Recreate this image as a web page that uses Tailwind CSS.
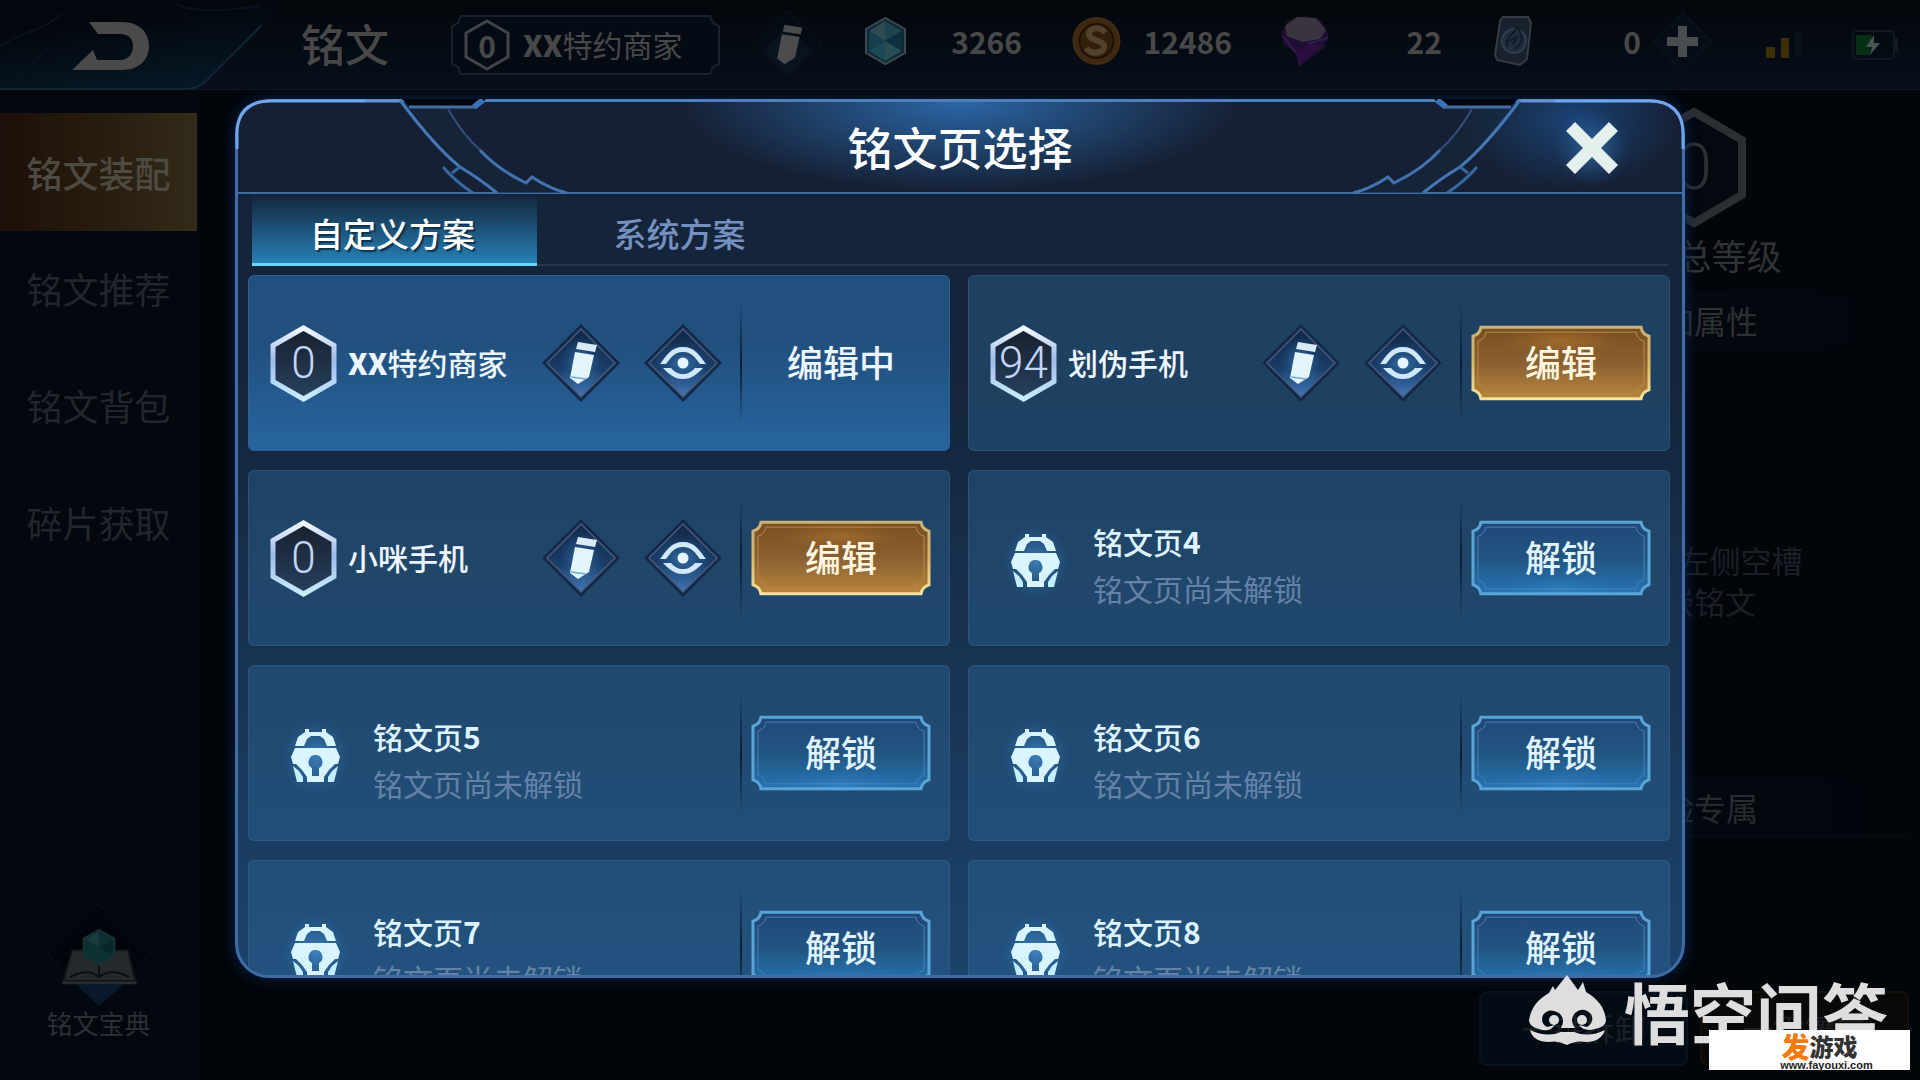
<!DOCTYPE html>
<html lang="zh-CN">
<head>
    <meta charset="UTF-8">
    <meta name="viewport" content="width=device-width, initial-scale=1.0">
    <title>铭文页选择</title>
    <script src="https://cdn.jsdelivr.net/npm/@tailwindcss/browser@4"></script>
</head>
<body class="bg-[#02060b] font-['Noto_Sans_CJK_SC',sans-serif] text-[#484848]">
    <!-- Shared icons -->
    <svg class="absolute h-0 w-0" aria-hidden="true">
        <defs>
            <linearGradient id="hexStroke" x1="0" y1="0" x2="0" y2="1">
                <stop offset="0" stop-color="#f1f7ff"/><stop offset=".45" stop-color="#9cbbea"/><stop offset="1" stop-color="#c9ecff"/>
            </linearGradient>
            <linearGradient id="hexFill" x1="0" y1="0" x2="0" y2="1">
                <stop offset="0" stop-color="#16202c"/><stop offset="1" stop-color="#28415f"/>
            </linearGradient>
            <linearGradient id="diamondFill" x1="0" y1="0" x2="0" y2="1">
                <stop offset="0" stop-color="#122848"/><stop offset=".6" stop-color="#1a3c66"/><stop offset="1" stop-color="#447abb"/>
            </linearGradient>
            <linearGradient id="goldFill" x1="0" y1="0" x2="0" y2="1">
                <stop offset="0" stop-color="#7a4f20"/><stop offset=".5" stop-color="#8a6032"/><stop offset="1" stop-color="#b8863c"/>
            </linearGradient>
            <linearGradient id="goldLine" x1="0" y1="0" x2="0" y2="1">
                <stop offset="0" stop-color="#c9b27a"/><stop offset=".5" stop-color="#d9b865"/><stop offset="1" stop-color="#f5e39c"/>
            </linearGradient>
            <linearGradient id="blueFill" x1="0" y1="0" x2="0" y2="1">
                <stop offset="0" stop-color="#21477a"/><stop offset=".5" stop-color="#22557f"/><stop offset="1" stop-color="#2674b4"/>
            </linearGradient>
            <radialGradient id="glow"><stop offset="0" stop-color="#5cb4ff" stop-opacity=".6"/><stop offset="1" stop-color="#2f86d8" stop-opacity="0"/></radialGradient>
            <radialGradient id="goldGlow"><stop offset="0" stop-color="#c08236" stop-opacity=".45"/><stop offset="1" stop-color="#b87828" stop-opacity="0"/></radialGradient>
        </defs>
        <symbol id="hexagon" viewBox="0 0 67 77">
            <path d="M33.500 3 64 20.500V56.500L33.500 74 3 56.500V20.500Z" fill="url(#hexFill)" stroke="url(#hexStroke)" stroke-width="5"/>
        </symbol>
        <symbol id="diamond" viewBox="0 0 78 78">
            <path d="M39 0 78 39 39 78 0 39Z" fill="#14294a"/>
            <path d="M39 5 73 39 39 73 5 39Z" fill="url(#diamondFill)" stroke="#47597a" stroke-width="1.500"/>
        </symbol>
        <symbol id="pencil" viewBox="0 0 78 78">
            <ellipse cx="39" cy="39" rx="22" ry="27" fill="url(#glow)" opacity=".7"/>
            <path d="M36 18 55 21 53 28 34 25Z" fill="#d9ebf6"/>
            <path d="M33 28 52 31 47 53 36 60 28 54Z" fill="#e3f5fb"/>
            <path d="M29 53 44 55" stroke="#6fa8cd" stroke-width="1.500"/>
        </symbol>
        <symbol id="eye" viewBox="0 0 78 78">
            <ellipse cx="39" cy="39" rx="30" ry="22" fill="url(#glow)" opacity=".7"/>
            <path d="M16 40H22C27 34 30 28 39 28S51 34 56 40H62C55 31 51 23 39 23S23 31 16 40Z" fill="#cfe8fb"/>
            <path d="M19 44H27C31 48 34 50 39 50S47 48 51 44H59C53 50 48 55 39 55S25 50 19 44Z" fill="#cfe8fb"/>
            <circle cx="39" cy="39" r="5.500" fill="#e6f5ff"/>
        </symbol>
        <symbol id="lock" viewBox="0 0 70 76">
            <ellipse cx="35" cy="38" rx="33" ry="37" fill="url(#glow)" opacity=".8"/>
            <path d="M14 27 17 18 24 13V10H28V13H41V10H45V13L52 18 55 27H46L43 20 39 17H30L26 20 23 27Z" fill="#d8f5ff"/>
            <path fill-rule="evenodd" d="M14 29H55L59 38 57 45H54L48 51 43 58V63H26V58L21 51 15 45H12L10 38ZM34.500 36A7 7 0 0 0 31 49V57H38V49A7 7 0 0 0 34.500 36Z" fill="#d8f5ff"/>
            <path d="M12 47 18 52 22 58V63H16ZM57 47 51 52 47 58V63H53Z" fill="#c4edff"/>
        </symbol>
        <symbol id="frame" viewBox="0 0 181 76">
            <path d="M10 2H171Q172 9 179 11V65Q172 67 171 74H10Q9 67 2 65V11Q9 9 10 2Z"/>
        </symbol>
        <symbol id="frameInner" viewBox="0 0 181 76">
            <path d="M15 7H166Q167 14 174 16V60Q167 62 166 69H15Q14 62 7 60V16Q14 14 15 7Z"/>
        </symbol>
    </svg>

    <div class="relative flex h-screen flex-col overflow-hidden">
        <!-- Top bar -->
        <header class="flex h-[90px] shrink-0 items-center border-b border-[#0f1925] bg-linear-to-b from-[#03070b] to-[#080f1b] pr-[22px]">
            <button class="h-[90px] w-[285px] shrink-0" aria-label="返回">
                <svg viewBox="0 0 285 90" class="h-full w-full">
                    <defs><linearGradient id="backFill" x1="0" y1="0" x2=".4" y2="1"><stop offset=".3" stop-color="#03060d"/><stop offset="1" stop-color="#051723"/></linearGradient></defs>
                    <path d="M0 0H285L207 80Q198 90 184 90H0Z" fill="url(#backFill)"/>
                    <path d="M262 25 207 80Q198 89 184 89H0" fill="none" stroke="#102635" stroke-width="2"/>
                    <path d="M60 14C44 32 24 30 0 46M48 48C36 66 22 64 18 82M175 4C200 14 230 10 260 6" fill="none" stroke="#091320" stroke-width="2"/>
                    <path d="M89 22H122C140 22 149 33 149 46S140 70 122 70H72L93 50 97 60H120C128 60 133 54 133 46S128 34 120 34H98Z" fill="#4a4a4b"/>
                </svg>
            </button>
            <h1 class="ml-[16px] w-[89px] shrink-0 pb-[4px] text-[44px] font-medium leading-none">铭文</h1>
            <button class="relative ml-[61px] flex h-[60px] w-[269px] shrink-0 items-center pl-[13px]">
                <svg viewBox="0 0 269 60" class="absolute inset-0 h-full w-full"><path d="M10 1H259L262 8 268 11V49L262 52 259 59H10L7 52 1 49V11L7 8Z" fill="#050b15" stroke="#17222e" stroke-width="2"/></svg>
                <span class="relative flex h-[52px] w-[46px] items-center justify-center text-[30px] font-bold leading-none">
                    <svg viewBox="0 0 46 52" class="absolute inset-0 h-full w-full"><path d="M23 2 44 14V38L23 50 2 38V14Z" fill="none" stroke="#41454a" stroke-width="3"/></svg>
                    0
                </span>
                <span class="relative ml-[13px] whitespace-nowrap pb-[2px] text-[30px] leading-none"><b class="font-black">XX</b>特约商家</span>
            </button>
            <button class="ml-[31px] w-[73px] shrink-0" aria-label="改名">
                <svg viewBox="0 0 78 78" class="h-[73px] w-[73px]">
                    <path d="M39 2 76 39 39 76 2 39Z" fill="#050b14" stroke="#0d1623"/>
                    <path d="M12 46 39 20 66 46 39 74Z" fill="#08131f"/>
                    <path d="M36 18 55 21 53 28 34 25ZM33 28 52 31 47 53 36 60 28 54Z" fill="#4a4c4e"/>
                </svg>
            </button>
            <div class="flex items-center pb-[7px] text-right text-[30px] font-bold leading-none">
                <svg viewBox="0 0 43 50" class="ml-[40px] h-[50px] w-[43px] shrink-0">
                    <path d="M21.500 2 41 13V37L21.500 48 2 37V13Z" fill="#0e2a36" stroke="#3c4a50" stroke-width="2"/>
                    <path d="M21 5V25L5 15Z" fill="#2f4a50"/><path d="M21 5V25L38 15Z" fill="#1c454e"/><path d="M5 15 21 25 5 35Z" fill="#173e4b"/><path d="M38 15 21 25 38 35Z" fill="#0e303e"/><path d="M5 35 21 25V45Z" fill="#194a55"/><path d="M38 35 21 25V45Z" fill="#2a4c53"/>
                </svg>
                <span class="w-[115px] shrink-0">3266</span>
                <svg viewBox="0 0 49 50" class="ml-[50px] h-[50px] w-[49px] shrink-0">
                    <circle cx="24.500" cy="25" r="23" fill="#3e2810" stroke="#402c15" stroke-width="2"/><circle cx="24.500" cy="25" r="17" fill="#332008" stroke="#1d1206" stroke-width="2"/>
                    <path d="M33 17C29 10 17 11 17 18S33 24 32 31 19 39 14 32" fill="none" stroke="#52422c" stroke-width="6"/>
                </svg>
                <span class="w-[111px] shrink-0">12486</span>
                <svg viewBox="0 0 50 50" class="ml-[48px] h-[50px] w-[50px] shrink-0">
                    <path d="M1 17 8 5 24 0 41 4 49 19 44 32 20 50 16 38 3 28Z" fill="#200e32"/>
                    <path d="M5 10 17 1 36 2 46 14 40 23 22 26 7 20Z" fill="#3a3340"/><path d="M3 20 17 38 20 49 30 27 48 22" fill="none" stroke="#311c50" stroke-width="2"/><path d="M16 37 31 28 42 30 20 49Z" fill="#2a0e3e"/>
                </svg>
                <span class="w-[112px] shrink-0">22</span>
                <svg viewBox="0 0 40 52" class="ml-[51px] h-[52px] w-[40px] shrink-0">
                    <path d="M10 2H35L38 8 34 44 27 50 4 45 2 40 7 6Z" fill="#18222e" stroke="#343b43" stroke-width="2"/>
                    <circle cx="21" cy="26" r="12" fill="#202d3b" stroke="#303e4b" stroke-width="2"/><path d="M14 32C12 20 22 20 24 12 32 22 29 30 21 34M16 26 24 22 20 30" fill="none" stroke="#121b27" stroke-width="2"/>
                </svg>
                <span class="w-[108px] shrink-0">0</span>
                <button class="ml-[11px] w-[61px] shrink-0" aria-label="增加">
                    <svg viewBox="0 0 61 61" class="h-[61px] w-[61px]"><path d="M30.500 1 60 30.500 30.500 60 1 30.500Z" fill="#070d17" stroke="#111a26"/><path d="M26 15H35V26H46V35H35V46H26V35H15V26H26Z" fill="#4a4d50"/></svg>
                </button>
            </div>
            <svg viewBox="0 0 37 28" class="ml-auto mr-[49px] h-[28px] w-[37px] shrink-0"><path d="M0 16H9V27H0ZM15 7H23V27H15Z" fill="#3c2f08"/><path d="M29 1H36V27H29Z" fill="#0a111a"/></svg>
            <svg viewBox="0 0 46 30" class="h-[30px] w-[46px] shrink-0"><rect x="1" y="1" width="41" height="28" rx="4" fill="none" stroke="#0f1721" stroke-width="2"/><path d="M43 8H46V22H43Z" fill="#121b26"/><path d="M4 5H20L18 25H4Z" fill="#053015"/><path d="M22 5 14 17H20L18 25 28 13H22Z" fill="#4a5450"/></svg>
        </header>

        <div class="flex min-h-0 flex-1">
            <!-- Side menu -->
            <aside class="flex w-[198px] shrink-0 flex-col border-r border-[#050a12] bg-[#03070e] pt-[23px]">
                <nav class="flex flex-col text-[36px] leading-none text-[#22262c]">
                    <a href="#" class="flex h-[118px] items-center justify-center bg-linear-to-r from-[#1d0f09] via-[#281c0c] to-[#332b19] font-medium text-[#4d4a41]">铭文装配</a>
                    <a href="#" class="mx-[26px] flex h-[117px] items-center justify-center border-b border-[#080d14] pb-[2px]">铭文推荐</a>
                    <a href="#" class="mx-[26px] flex h-[117px] items-center justify-center border-b border-[#080d14] pb-[2px]">铭文背包</a>
                    <a href="#" class="mx-[26px] flex h-[117px] items-center justify-center border-b border-[#080d14] pb-[2px]">碎片获取</a>
                </nav>
                <a href="#" class="mb-[40px] mt-auto flex flex-col items-center text-[26px] leading-[34px] text-[#2c2f34]">
                    <svg viewBox="0 0 116 110" class="h-[106px] w-[116px]">
                        <path d="M58 1 115 56 58 110 1 56Z" fill="#02040a"/><path d="M58 4 112 56 88 80H28L4 56Z" fill="#02050b" stroke="#11161c"/>
                        <path d="M30 84H88L58 110Z" fill="#08192a"/>
                        <path d="M30 52H88L96 84H21Z" fill="#24292c" stroke="#101418" stroke-width="2"/><path d="M20 86H97" stroke="#272c31" stroke-width="3"/>
                        <path d="M28 80Q46 70 58 80Q72 70 89 80M58 60V80" fill="none" stroke="#0b1014" stroke-width="2"/>
                        <path d="M58 31 74 40V58L58 67 42 58V40Z" fill="#0c3034" stroke="#1a3033" stroke-width="2"/><path d="M58 33V49L44 41Z" fill="#1b3c3e"/><path d="M72 41 58 49 72 57Z" fill="#08262c"/>
                    </svg>
                    铭文宝典
                </a>
            </aside>

            <!-- Page details -->
            <section class="ml-auto mr-[11px] flex w-[430px] flex-col items-center whitespace-nowrap">
                <div class="relative mt-[17px] flex h-[121px] w-[106px] items-center justify-center font-[Roboto] text-[64px] font-light leading-none text-[#2c3033]">
                    <svg viewBox="0 0 106 121" class="absolute inset-0 h-full w-full"><path d="M53 5 101 33V88L53 116 5 88V33Z" fill="#04080f" stroke="#2b2f32" stroke-width="8"/></svg>
                    <span class="relative">0</span>
                </div>
                <p class="mt-[3px] text-[35px] leading-[48px] text-[#303335]">铭文总等级</p>
                <h2 class="mt-[12px] h-[59px] w-full bg-linear-to-r from-[#050b14] to-[#02060b] text-center text-[32px] leading-[59px] text-[#2e3134]">附加属性</h2>
                <p class="mt-[189px] text-center text-[31px] leading-[41px] text-[#1a2026]">请点击左侧空槽<br>镶嵌铭文</p>
                <h2 class="mt-[157px] h-[59px] w-full border-b border-[#080e15] bg-linear-to-r from-[#050a14] to-[#02060b] text-center text-[32px] leading-[59px] text-[#282b2e]">体验专属</h2>
                <div class="mb-[14px] mt-auto flex w-full gap-[12px] text-[31px] text-[#1c2126]">
                    <button class="h-[75px] flex-1 rounded-lg border-2 border-[#091320] bg-[#030b15]">一键拆卸</button>
                    <button class="h-[75px] flex-1 rounded-lg border-2 border-[#14110d] bg-[#0b0908]">一键镶嵌</button>
                </div>
            </section>
        </div>

        <!-- Rune page dialog -->
        <div class="absolute inset-0 flex px-[235px] pb-[102px] pt-[99px]">
            <div role="dialog" aria-labelledby="dialogTitle" class="relative flex min-w-0 flex-1 flex-col rounded-[34px] border-[3px] border-[#416da6] border-t-[#4f7fbd] bg-linear-to-b from-[#14243a] from-30% to-[#1c436d] shadow-[0_0_14px_#0b2750]">
                <div class="relative flex h-[92px] shrink-0 items-center justify-center rounded-t-[31px] border-b-2 border-[#426b9d] bg-[#152034] bg-radial-[ellipse_280px_90px_at_50%_0%] from-[#2b66a6] to-[#152034] pb-[2px]">
                    <div class="absolute right-0 top-0 h-full w-[220px] rounded-tr-[31px] bg-radial-[at_50%_20%] from-[#1b4274] to-transparent to-70%"></div>
                    <svg viewBox="0 0 340 95" class="absolute -left-[3px] -top-[3px] h-[95px] w-[340px]">
                        <use href="#headerCorner"/>
                    </svg>
                    <svg viewBox="0 0 340 95" class="absolute -right-[3px] -top-[3px] h-[95px] w-[340px] -scale-x-100">
                        <defs>
                            <g id="headerCorner" fill="none" stroke="#5288c8" stroke-width="2">
                                <path d="M167 0H251L242 8H175Z" fill="#02060e" stroke="none"/>
                                <path d="M175 8H213Q228 36 245 51Q262 70 291 84L297 78Q315 90 332 94H262Q220 65 175 8Z" fill="#16283c" stroke="none" opacity=".6"/>
                                <path d="M2 50V35Q2 2 36 2H130" stroke="#70a6ee" stroke-width="3"/>
                                <path d="M130 2H166" stroke="#6294d6" stroke-width="3"/>
                                <path d="M165 1C185 28 203 50 225 68Q245 80 262 94" stroke="#4577b6" stroke-width="3"/>
                                <path d="M225 68 217 74M208 68Q221 83 238 94" stroke="#37689f" stroke-width="3"/>
                                <path d="M174 8H240" stroke="#426fa4" stroke-width="3"/>
                                <path d="M239 8 248 1" stroke="#3c72b8" stroke-width="6"/>
                                <path d="M213 10Q228 36 245 51" stroke="#344f78"/>
                                <path d="M245 51Q262 70 291 84L297 78Q315 90 332 94" stroke="#4372ae" stroke-width="3"/>
                            </g>
                        </defs>
                        <use href="#headerCorner"/>
                    </svg>
                    <h2 id="dialogTitle" class="relative text-[45px] font-medium leading-none text-white">铭文页选择</h2>
                    <button class="absolute right-[52px] top-[8px] h-[76px] w-[76px]" aria-label="关闭">
                        <svg viewBox="0 0 76 76" class="h-full w-full">
                            <circle cx="38" cy="38" r="38" fill="url(#glow)" opacity=".6"/>
                            <path d="M12 21 21 12 38 29 55 12 64 21 47 38 64 55 55 64 38 47 21 64 12 55 29 38Z" fill="#e4f0ee"/>
                        </svg>
                    </button>
                </div>

                <div role="tablist" class="mx-[14px] flex h-[72px] shrink-0 border-b-2 border-[#26384e] text-[33px] leading-none">
                    <button role="tab" aria-selected="true" class="-mb-[2px] w-[285px] border-b-[3px] border-[#66d6fa] bg-linear-to-b from-transparent to-[#2580b5] pr-1 pt-[9px] font-medium text-white text-shadow-[2px_2px_1px_#0c3350]">自定义方案</button>
                    <button role="tab" aria-selected="false" class="w-[285px] pt-[9px] font-medium text-[#7690bf]">系统方案</button>
                </div>

                <div class="min-h-0 flex-1 overflow-hidden rounded-b-[31px]">
                    <div id="pageList" class="grid grid-cols-2 gap-x-[18px] gap-y-[19px] pl-[10px] pr-[12px] pt-[9px]"></div>
                </div>
            </div>
        </div>

        <!-- Watermarks -->
        <div class="absolute bottom-[34px] right-[32px] flex items-center gap-[18px] text-[#dedede]">
            <svg viewBox="0 0 77 70" class="h-[70px] w-[77px]">
                <path d="M0 46Q2 28 20 18L24 11 26 15 38 0 49 15 54 7 57 17Q76 28 77 46Q76 52 66 54Q55 57 50 50L58 52Q66 47 62 39Q54 31 46 38Q40 45 46 53H32Q37 44 30 38Q20 32 14 40Q11 48 18 52L26 50Q20 58 10 54Q1 52 0 46Z" fill="#dedede"/>
                <path d="M1 55Q18 63 32 57H45Q60 63 76 55Q72 67 57 67Q47 65 38 70Q29 65 20 67Q4 67 1 55Z" fill="#dedede"/>
                <circle cx="25" cy="45" r="5" fill="#dedede"/><circle cx="53" cy="45" r="5" fill="#dedede"/>
            </svg>
            <span class="text-[66px] font-bold leading-[72px]">悟空问答</span>
        </div>
        <div class="absolute bottom-[10px] right-[10px] flex h-[40px] w-[201px] flex-col items-center bg-white pl-[34px] pt-[2px]">
            <p class="flex items-center pr-[14px] leading-[28px]"><b class="text-[28px] font-black text-[#f47a12]">发</b><b class="text-[24px] font-black text-[#333]">游戏</b></p>
            <p class="font-['Liberation_Sans'] text-[11px] font-bold leading-[10px] text-[#222]">www.fayouxi.com</p>
        </div>
    </div>

    <script>
        const pages = [
            { name: '<b class="font-black">XX</b>特约商家', level: 0, active: true },
            { name: "划伪手机", level: 94 },
            { name: "小咪手机", level: 0 },
            { name: "铭文页<b>4</b>", locked: true },
            { name: "铭文页<b>5</b>", locked: true },
            { name: "铭文页<b>6</b>", locked: true },
            { name: "铭文页<b>7</b>", locked: true },
            { name: "铭文页<b>8</b>", locked: true },
        ];

        function pageInfo(page) {
            if (page.locked) {
                return `<svg class="ml-[32px] mt-[8px] h-[76px] w-[70px] shrink-0"><use href="#lock"/></svg>
                    <div class="ml-[22px] flex-1 pt-[13px] text-[30px] leading-[47px]">
                        <h3 class="font-medium text-[#dff3ff]">${page.name}</h3>
                        <p class="text-[#6482a8]">铭文页尚未解锁</p>
                    </div>`;
            }
            return `<div class="relative ml-[21px] flex h-[77px] w-[67px] shrink-0 items-center justify-center font-[Roboto] text-[44px] font-light leading-none text-[#c3d6f8]">
                        <svg class="absolute inset-0 h-full w-full"><use href="#hexagon"/></svg>
                        <span class="relative">${page.level}</span>
                    </div>
                    <h3 class="ml-[11px] flex-1 whitespace-nowrap pb-[2px] text-[30px] font-medium leading-none text-[#eef6ff]">${page.name}</h3>
                    <div class="mr-[18px] flex gap-[24px]">
                        <button class="h-[78px] w-[78px]" aria-label="改名"><svg class="h-full w-full"><use href="#diamond"/><use href="#pencil"/></svg></button>
                        <button class="h-[78px] w-[78px]" aria-label="预览"><svg class="h-full w-full"><use href="#diamond"/><use href="#eye"/></svg></button>
                    </div>`;
        }

        function pageAction(page) {
            if (page.active) {
                return `<span class="ml-[9px] mr-[18px] w-[180px] pb-[4px] text-center text-[36px] font-medium leading-none text-[#eef6ff]">编辑中</span>`;
            }
            if (page.locked) {
                return `<button class="relative ml-[9px] mr-[18px] h-[76px] w-[180px] pb-[4px] text-[36px] font-medium leading-none text-[#e0f4ff]">
                    <svg class="absolute inset-0 h-full w-full"><use href="#frame" fill="url(#blueFill)" stroke="#5ba5d6" stroke-width="3"/><use href="#frameInner" fill="none" stroke="#4482b9" stroke-width="1"/><ellipse cx="90" cy="70" rx="70" ry="18" fill="url(#glow)" opacity=".3"/></svg>
                    <span class="relative">解锁</span>
                </button>`;
            }
            return `<button class="relative ml-[9px] mr-[18px] h-[76px] w-[180px] pb-[4px] text-[36px] font-medium leading-none text-[#fff6e0]">
                <svg class="absolute inset-0 h-full w-full"><use href="#frame" fill="url(#goldFill)" stroke="url(#goldLine)" stroke-width="3"/><use href="#frameInner" fill="none" stroke="#b88b4a" stroke-width="1"/><ellipse cx="90" cy="16" rx="60" ry="14" fill="url(#goldGlow)"/></svg>
                <span class="relative">编辑</span>
            </button>`;
        }

        document.getElementById("pageList").innerHTML = pages.map((page) => `
            <article class="flex h-[176px] items-center rounded-md border ${page.active ? "border-[#2d6196] bg-linear-to-b from-[#21507f] from-40% to-[#27659f]" : "border-[#5a8ab0]/20 bg-[#2c6694]/43"}">
                ${pageInfo(page)}
                <div class="h-[122px] w-[2px] shrink-0 bg-linear-to-b from-transparent via-[#0b1c33] to-transparent"></div>
                ${pageAction(page)}
            </article>`).join("");
    </script>
</body>
</html>
